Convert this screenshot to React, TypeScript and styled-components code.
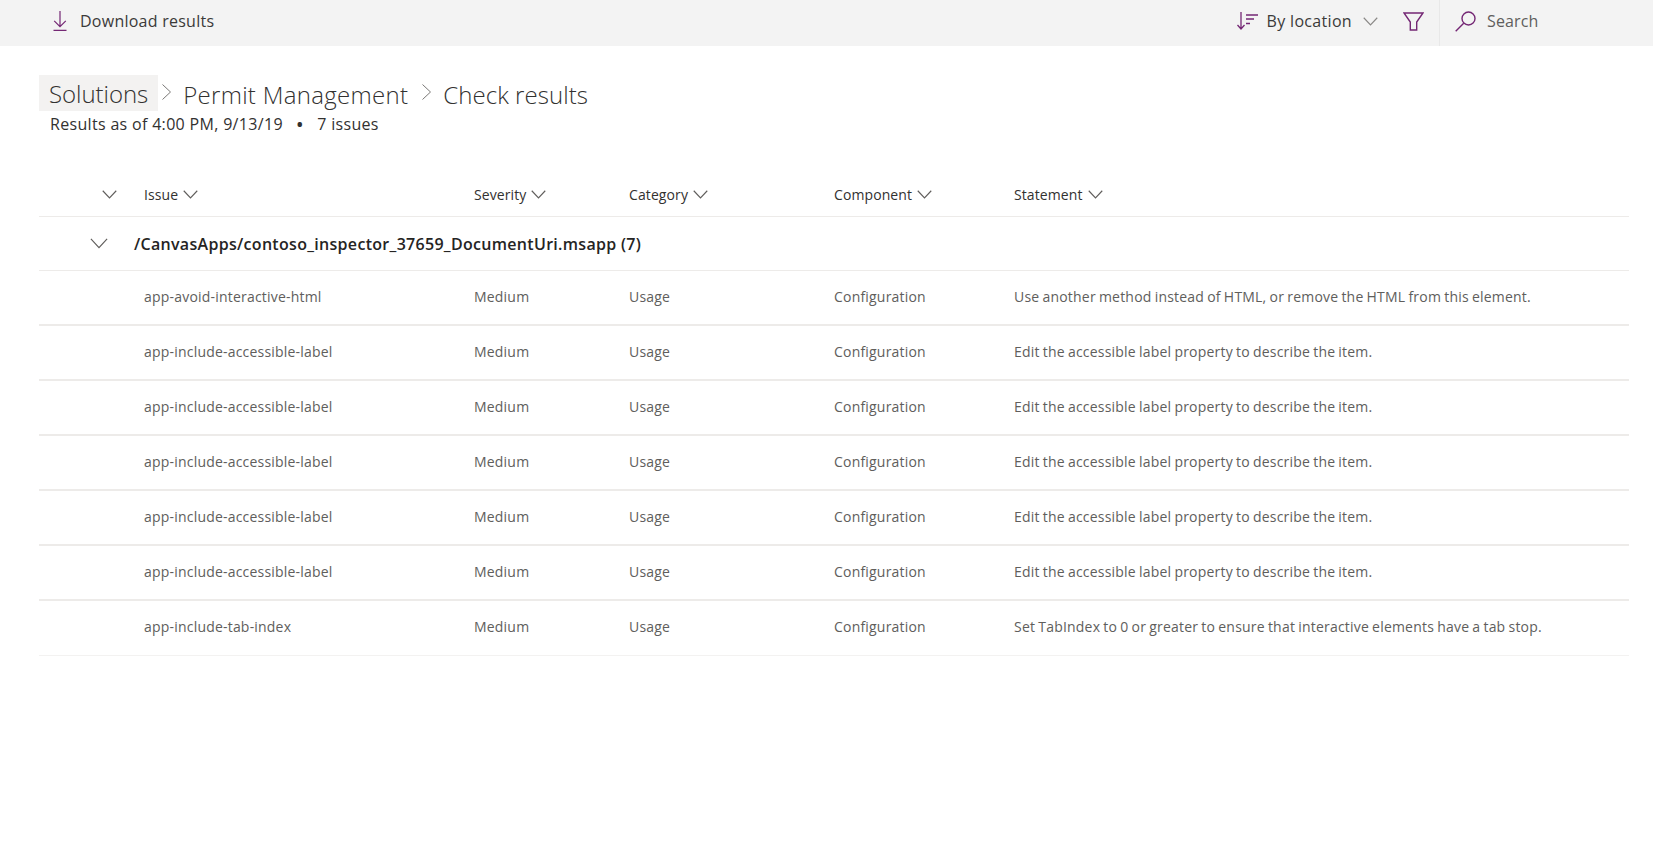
import React from "react";
import styled, { createGlobalStyle } from "styled-components";

const Global = createGlobalStyle`
  html, body { margin: 0; padding: 0; background: #fff; }
  body { font-family: "Open Sans", "Noto Sans", "Liberation Sans", sans-serif; color: #323130; }
`;

const Page = styled.div`
  width: 1653px;
  height: 858px;
  overflow: hidden;
`;

const Toolbar = styled.div`
  height: 46px;
  background: #f3f3f3;
  display: flex;
  align-items: center;
  padding-left: 53px;
`;

const ToolButton = styled.div`
  display: flex;
  align-items: center;
  gap: 13px;
  padding-bottom: 4px;
  font-size: 16px;
  line-height: 22px;
  letter-spacing: 0.25px;
  color: #3b3a39;
`;

const Spacer = styled.div`
  flex: 1;
`;

const SortButton = styled(ToolButton)`
  gap: 9px;
  margin-right: 25px;
  letter-spacing: 0.32px;
`;

const SortCaret = styled.span`
  display: flex;
  margin-left: 2px;
`;

const FilterButton = styled.div`
  display: flex;
  align-items: center;
  padding-bottom: 4px;
  margin-right: 15px;
`;

const SearchBox = styled.div`
  width: 214px;
  height: 46px;
  box-sizing: border-box;
  border-left: 1px solid #e8e8e8;
  display: flex;
  align-items: center;
  gap: 11px;
  padding: 0 0 4px 15px;
  font-size: 16px;
  letter-spacing: 0.15px;
  color: #605e5c;
`;

const Header = styled.div`
  padding: 29px 0 0 39px;
`;

const Breadcrumbs = styled.div`
  display: flex;
  align-items: center;
  height: 36px;
  font-weight: 300;
  font-size: 24px;
  color: #323130;
`;

const Crumb = styled.div<{ $current?: boolean; $tight?: boolean }>`
  height: 36px;
  line-height: 37px;
  padding: 0 10px;
  white-space: nowrap;
  letter-spacing: ${(p) => (p.$current ? "-0.05px" : p.$tight ? "0.05px" : "0.3px")};
  background: ${(p) => (p.$current ? "#f3f2f1" : "transparent")};
  margin-top: ${(p) => (p.$current ? "0" : "2px")};
`;

const CrumbSep = styled.div`
  display: flex;
  align-items: center;
  margin: -3px 1px 0 3px;
`;

const Subtitle = styled.div`
  display: flex;
  margin: 2px 0 0 11px;
  font-size: 16px;
  line-height: 22px;
  letter-spacing: 0.32px;
  color: #323130;
`;

const Dot = styled.span`
  margin: 0 14px;
  font-weight: 700;
`;

const Table = styled.div`
  margin: 39px 24px 0 39px;
`;

const columns = "105px 330px 155px 205px 180px 1fr";

const HeadRow = styled.div`
  display: grid;
  grid-template-columns: ${columns};
  height: 41px;
  padding-bottom: 1px;
  align-items: center;
  border-bottom: 1px solid #edebe9;
  font-size: 14px;
  letter-spacing: 0.1px;
  color: #323130;
`;

const HeadToggle = styled.div`
  display: flex;
  justify-content: flex-end;
  padding-right: 27px;
`;

const HeadCell = styled.div`
  display: flex;
  align-items: center;
  gap: 5px;
`;

const GroupRow = styled.div`
  display: flex;
  align-items: center;
  height: 53px;
  border-bottom: 1px solid #edebe9;
  font-size: 16px;
  font-weight: 600;
  letter-spacing: 0.3px;
  color: #252423;
`;

const GroupToggle = styled.div`
  width: 95px;
  display: flex;
  justify-content: flex-end;
  padding-right: 26px;
  box-sizing: border-box;
`;

const Row = styled.div`
  display: grid;
  grid-template-columns: ${columns};
  height: 51px;
  padding-bottom: 2px;
  align-items: center;
  border-bottom: 2px solid #edebe9;
  font-size: 14px;
  letter-spacing: 0.2px;
  word-spacing: -0.7px;
  color: #605e5c;
  &:last-child {
    padding-bottom: 3px;
    border-bottom-width: 1px;
    border-bottom-color: #f3f2f1;
  }
`;

const Purple = "#742774";

const Chevron = ({ size = 14, color = "#605e5c" }: { size?: number; color?: string }) => (
  <svg width={size} height={size * 0.6} viewBox="0 0 20 12" fill="none">
    <path d="M1 1l9 9.6L19 1" stroke={color} strokeWidth={size > 15 ? 1.3 : 1.5} />
  </svg>
);

const RightChevron = () => (
  <svg width="11" height="18" viewBox="0 0 11 18" fill="none">
    <path d="M1.5 1.5L9.5 9l-8 7.5" stroke="#7a7876" strokeWidth="1" />
  </svg>
);

const DownloadIcon = () => (
  <svg width="14" height="20" viewBox="0 0 14 20" fill="none" stroke={Purple} strokeWidth="1.2">
    <path d="M7 0v15.5M1.2 9.8L7 15.6l5.8-5.8M0.5 19.4h13" />
  </svg>
);

const SortIcon = () => (
  <svg width="21" height="18" viewBox="0 0 21 18" fill="none" stroke={Purple} strokeWidth="1.3">
    <path d="M4 0v17M0.5 13l3.5 4 3.5-4M9 3h12M9 7h8M9 11.5h4" />
  </svg>
);

const FilterIcon = () => (
  <svg width="21" height="19" viewBox="0 0 21 19" fill="none" stroke={Purple} strokeWidth="1.4">
    <path d="M1 1h19l-6.3 9v8H7.3v-8z" />
  </svg>
);

const SearchIcon = () => (
  <svg width="21" height="21" viewBox="0 0 21 21" fill="none" stroke={Purple} strokeWidth="1.4">
    <circle cx="13.5" cy="7.5" r="6.5" />
    <path d="M8.7 12.3L0.7 20.3" />
  </svg>
);

const rows = [
  ["app-avoid-interactive-html", "Use another method instead of HTML, or remove the HTML from this element."],
  ["app-include-accessible-label", "Edit the accessible label property to describe the item."],
  ["app-include-accessible-label", "Edit the accessible label property to describe the item."],
  ["app-include-accessible-label", "Edit the accessible label property to describe the item."],
  ["app-include-accessible-label", "Edit the accessible label property to describe the item."],
  ["app-include-accessible-label", "Edit the accessible label property to describe the item."],
  ["app-include-tab-index", "Set TabIndex to 0 or greater to ensure that interactive elements have a tab stop."],
];

const heads = ["Issue", "Severity", "Category", "Component", "Statement"];

export default function App() {
  return (
    <Page>
      <Global />
      <Toolbar>
        <ToolButton>
          <DownloadIcon />
          <span>Download results</span>
        </ToolButton>
        <Spacer />
        <SortButton>
          <SortIcon />
          <span>By location</span>
          <SortCaret><Chevron size={15} color="#8a8886" /></SortCaret>
        </SortButton>
        <FilterButton>
          <FilterIcon />
        </FilterButton>
        <SearchBox>
          <SearchIcon />
          <span>Search</span>
        </SearchBox>
      </Toolbar>
      <Header>
        <Breadcrumbs>
          <Crumb $current>Solutions</Crumb>
          <CrumbSep><RightChevron /></CrumbSep>
          <Crumb>Permit Management</Crumb>
          <CrumbSep><RightChevron /></CrumbSep>
          <Crumb $tight>Check results</Crumb>
        </Breadcrumbs>
        <Subtitle>
          <span>Results as of 4:00 PM, 9/13/19</span>
          <Dot>•</Dot>
          <span>7 issues</span>
        </Subtitle>
      </Header>
      <Table>
        <HeadRow>
          <HeadToggle><Chevron size={15} /></HeadToggle>
          {heads.map((h) => (
            <HeadCell key={h}>
              <span>{h}</span>
              <Chevron size={15} />
            </HeadCell>
          ))}
        </HeadRow>
        <GroupRow>
          <GroupToggle><Chevron size={18} /></GroupToggle>
          <span>/CanvasApps/contoso_inspector_37659_DocumentUri.msapp (7)</span>
        </GroupRow>
        {rows.map(([issue, statement], i) => (
          <Row key={i}>
            <span />
            <span>{issue}</span>
            <span>Medium</span>
            <span>Usage</span>
            <span>Configuration</span>
            <span>{statement}</span>
          </Row>
        ))}
      </Table>
    </Page>
  );
}
